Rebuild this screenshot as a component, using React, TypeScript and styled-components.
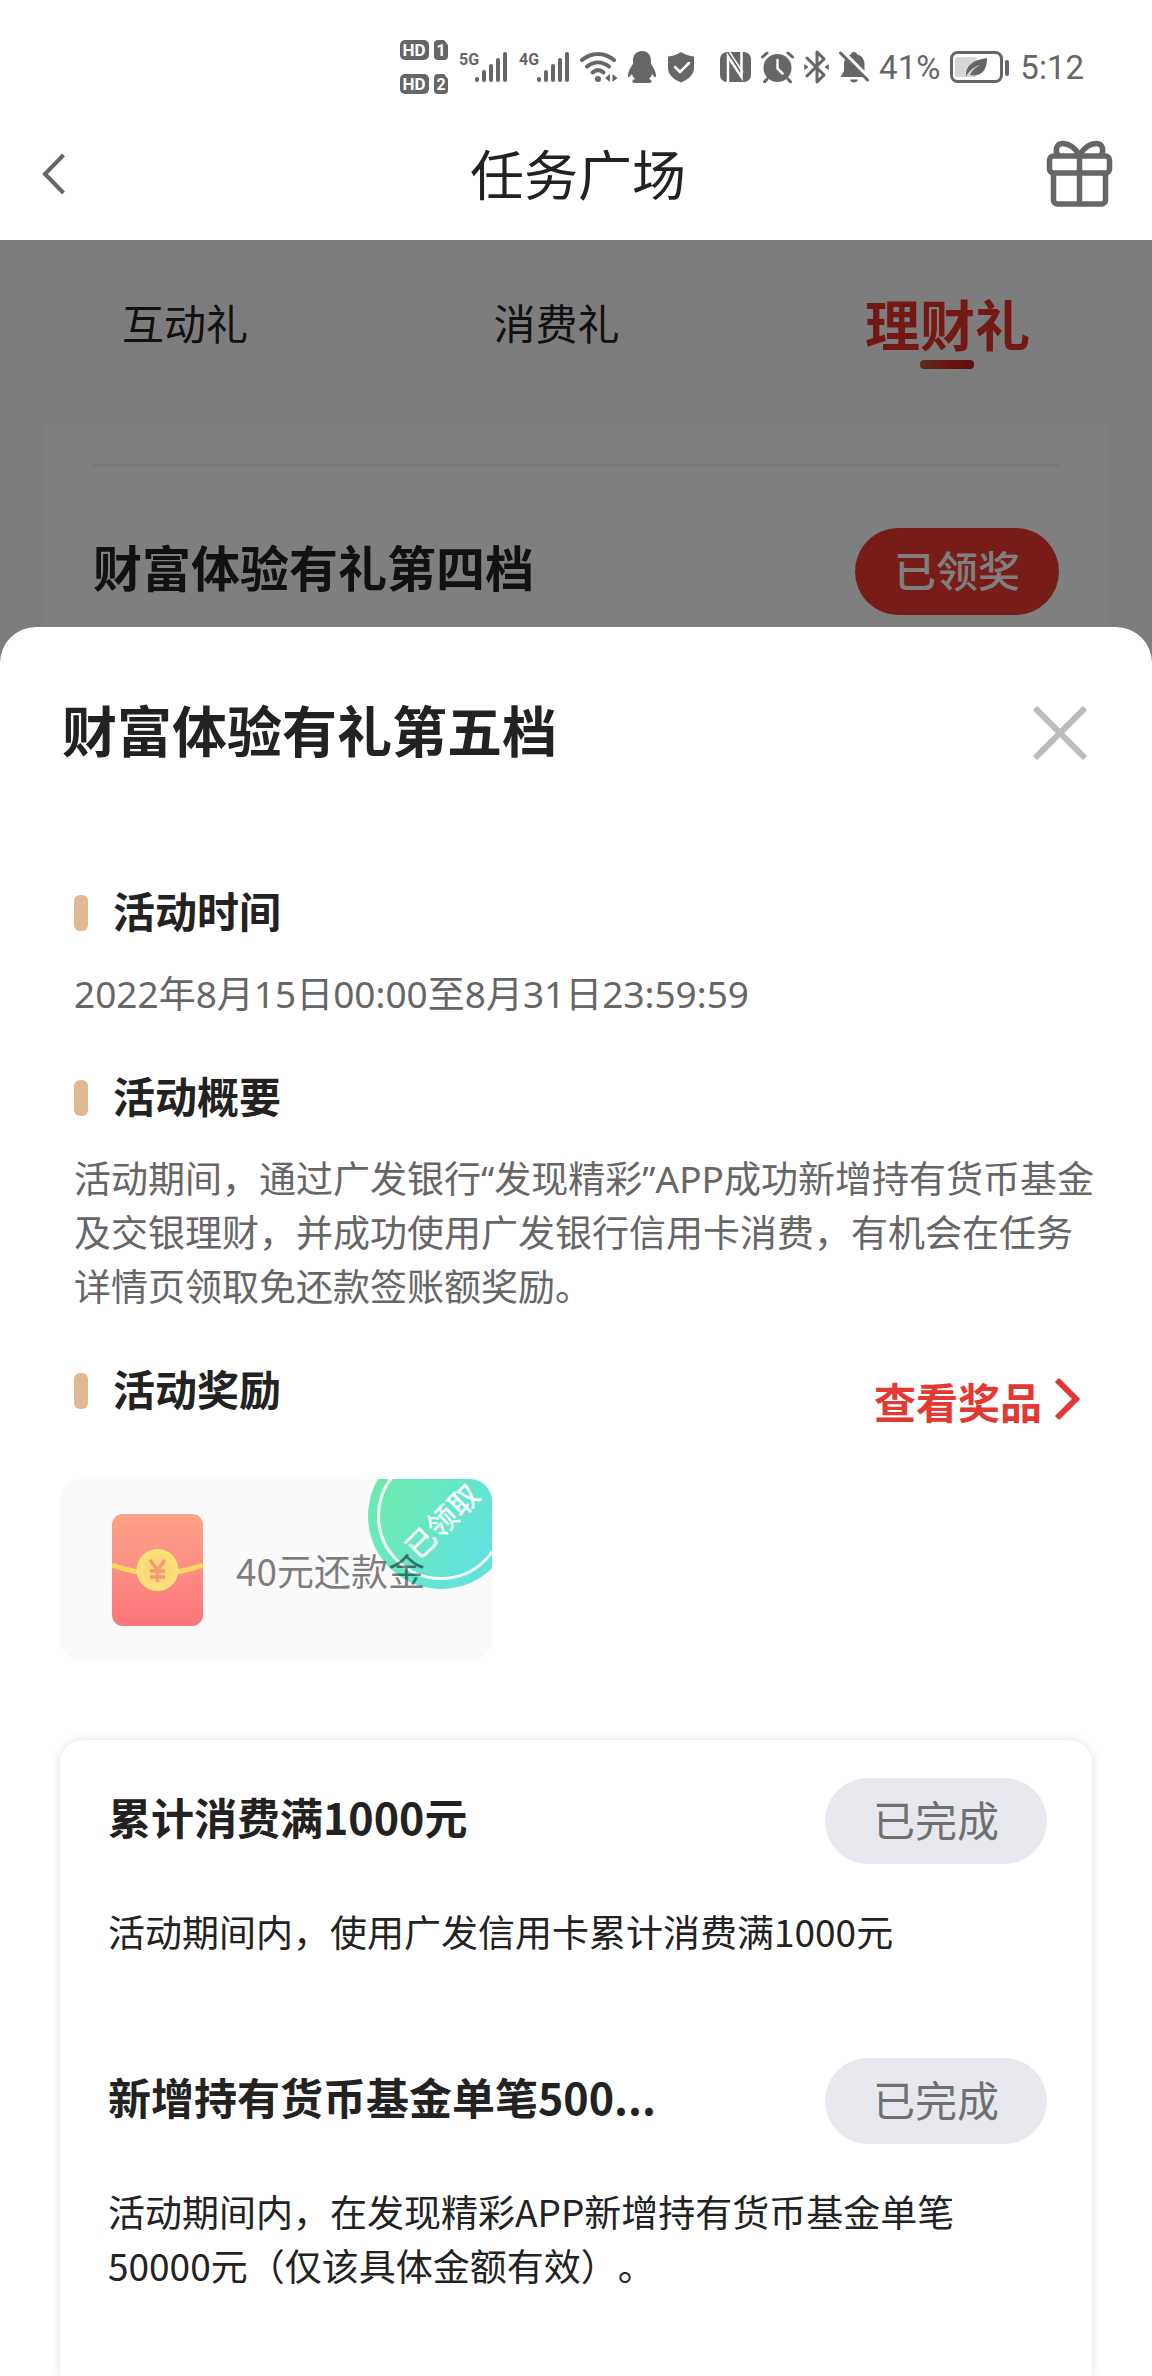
import React from 'react';
import styled, { createGlobalStyle } from 'styled-components';

const GlobalStyle = createGlobalStyle`
  *, *::before, *::after { box-sizing: border-box; }
  body {
    margin: 0;
    background: #fff;
    color: #222;
    font-family: "Noto Sans CJK SC", "Noto Sans", sans-serif;
    text-spacing-trim: space-all;
  }
  h1, h2, h3, p { margin: 0; }
  button { border: 0; margin: 0; padding: 0; background: none; color: inherit; font: inherit; cursor: pointer; }
`;

const Page = styled.div`
  display: flex;
  flex-direction: column;
  min-height: 100vh;
  overflow: hidden;
`;

/* ---------- status bar ---------- */

const StatusBar = styled.div`
  display: flex;
  justify-content: flex-end;
  align-items: center;
  gap: 24px;
  height: 110px;
  padding: 24px 68px 0 0;
  color: #666;
`;

const StatusGroup = styled.div`
  display: flex;
  align-items: center;
  gap: 10px;
`;

const StatusText = styled.span`
  padding-top: 2px;
  font: 400 33px/40px Roboto, sans-serif;
`;

const Glyph = styled.svg`
  display: block;
  flex: none;
`;

/* ---------- navigation ---------- */

const NavBar = styled.header`
  display: grid;
  grid-template-columns: 1fr auto 1fr;
  align-items: center;
  height: 130px;
  padding: 0 38px 0 42px;
`;

const NavTitle = styled.h1`
  padding-bottom: 4px;
  font-size: 54px;
  line-height: 80px;
  font-weight: 400;
`;

const NavButton = styled.button<{ $end?: boolean }>`
  justify-self: ${(p) => (p.$end ? 'end' : 'start')};
  padding-bottom: 2px;
  color: #666;
`;

/* ---------- dimmed content ---------- */

const Behind = styled.main`
  position: relative;
  height: 424px;
  background: #fbfbfb;
`;

const Dim = styled.div`
  position: absolute;
  inset: 0;
  background: rgba(0, 0, 0, 0.5);
`;

const Tabs = styled.nav`
  display: flex;
  justify-content: space-between;
  align-items: center;
  height: 184px;
  padding: 0 122px 20px;
`;

const Tab = styled.button<{ $active?: boolean }>`
  position: relative;
  font-size: ${(p) => (p.$active ? 55 : 42)}px;
  line-height: 80px;
  font-weight: ${(p) => (p.$active ? 700 : 400)};
  color: ${(p) => (p.$active ? '#e8302a' : '#222')};
  &::after {
    content: '';
    display: ${(p) => (p.$active ? 'block' : 'none')};
    position: absolute;
    left: 50%;
    bottom: -7px;
    width: 54px;
    height: 9px;
    margin-left: -27px;
    border-radius: 4px;
    background: linear-gradient(90deg, #b85a38, #d8241c 60%, #c01c18);
  }
`;

const TierCard = styled.section`
  height: 240px;
  margin: 0 44px;
  padding: 40px 49px 0;
  background: #fff;
`;

const TierRow = styled.div`
  display: flex;
  justify-content: space-between;
  align-items: center;
  padding-top: 62px;
  border-top: 2px solid #f0f0f0;
`;

const TierTitle = styled.h2`
  padding-bottom: 12px;
  font-size: 49px;
  line-height: 70px;
  font-weight: 700;
`;

const ClaimedPill = styled.button`
  width: 204px;
  height: 87px;
  padding-bottom: 6px;
  border-radius: 44px;
  background: #f0382e;
  color: #fff;
  font-size: 42px;
  font-weight: 500;
`;

/* ---------- bottom sheet ---------- */

const Sheet = styled.section`
  position: relative;
  display: flex;
  flex: 1;
  flex-direction: column;
  margin-top: -37px;
  padding: 66px 60px 0;
  border-radius: 36px 36px 0 0;
  background: #fff;
`;

const SheetHead = styled.div`
  display: flex;
  justify-content: space-between;
  align-items: center;
  padding: 0 5px 0 2px;
`;

const SheetTitle = styled.h2`
  padding-bottom: 10px;
  font-size: 55px;
  line-height: 70px;
  font-weight: 700;
`;

const Info = styled.div`
  display: flex;
  flex-direction: column;
  gap: 47px;
  margin: 110px -12px 0 14px;
`;

const Heading = styled.h3`
  display: flex;
  align-items: center;
  gap: 25px;
  font-size: 42px;
  line-height: 54px;
  font-weight: 700;
  &::before {
    content: '';
    width: 14px;
    height: 36px;
    margin-top: 5px;
    border-radius: 6px;
    background: #e0b892;
  }
`;

const InfoText = styled.p`
  margin-top: 30px;
  font-family: "Noto Sans", "Noto Sans CJK SC", sans-serif;
  font-size: 37px;
  line-height: 54px;
  color: #666;
`;

const RewardHead = styled.div`
  display: flex;
  justify-content: space-between;
  align-items: flex-start;
  padding-right: 24px;
`;

const PrizeLink = styled.a`
  display: flex;
  align-items: center;
  gap: 12px;
  font-size: 42px;
  line-height: 80px;
  font-weight: 700;
  color: #e23a33;
  text-decoration: none;
`;

const RewardCard = styled.div`
  position: relative;
  display: flex;
  align-items: center;
  gap: 33px;
  width: 432px;
  height: 182px;
  margin-top: 38px;
  padding-left: 52px;
  border-radius: 22px;
  overflow: hidden;
  background: #fafafa;
`;

const RewardName = styled.span`
  position: relative;
  font-size: 37px;
  line-height: 54px;
  color: rgba(0, 0, 0, 0.5);
`;

const Stamp = styled.div`
  position: absolute;
  top: -36px;
  right: -22px;
  display: grid;
  place-items: center;
  width: 146px;
  height: 146px;
  padding-top: 8px;
  border-radius: 50%;
  background: linear-gradient(120deg, #6ceab4 25%, #62e2dc 75%);
  &::before {
    content: '';
    position: absolute;
    inset: 9px;
    border: 3px solid #f4fffd;
    border-radius: 50%;
  }
`;

const StampText = styled.span`
  font-size: 30px;
  line-height: 30px;
  font-weight: 500;
  white-space: nowrap;
  color: #f4fffd;
  transform: rotate(-45deg);
`;

const TaskCard = styled.ul`
  display: flex;
  flex: 1;
  flex-direction: column;
  gap: 100px;
  margin: 79px 0 0;
  padding: 38px 45px 82px 48px;
  border-radius: 22px 22px 0 0;
  list-style: none;
  background: #fff;
  box-shadow: 0 0 10px rgba(0, 0, 0, 0.12);
`;

const TaskRow = styled.div`
  display: flex;
  justify-content: space-between;
  align-items: center;
`;

const TaskTitle = styled.h3`
  padding-bottom: 10px;
  font-size: 43px;
  line-height: 60px;
  font-weight: 700;
`;

const DonePill = styled.button`
  width: 222px;
  height: 86px;
  padding-bottom: 6px;
  border-radius: 43px;
  background: #e8e9ef;
  color: #707070;
  font-size: 42px;
`;

const TaskText = styled.p`
  margin-top: 40px;
  padding-right: 80px;
  font-size: 37px;
  line-height: 54px;
`;

/* ---------- drawings ---------- */

const HdBadges = () => (
  <Glyph width="48" height="54" viewBox="0 0 48 54" fill="currentColor">
    {[0, 34].map((y, i) => (
      <g key={y}>
        <rect x="0" y={y} width="29" height="20" rx="5" />
        <path d={`M38 ${y}h6l4 5v11a4 4 0 0 1-4 4h-6a4 4 0 0 1-4-4v-12a4 4 0 0 1 4-4z`} />
        <text x="14" y={y + 16} fill="#fff" fontFamily="Roboto, sans-serif" fontSize="17" fontWeight="700" textAnchor="middle">HD</text>
        <text x="41" y={y + 16} fill="#fff" fontFamily="Roboto, sans-serif" fontSize="16" fontWeight="700" textAnchor="middle">{i + 1}</text>
      </g>
    ))}
  </Glyph>
);

const Signal = ({ label, width }: { label: string; width: number }) => (
  <Glyph width={width} height="36" viewBox={`0 -2 ${width} 36`} fill="currentColor">
    <text x="1" y="14" fontFamily="Roboto, sans-serif" fontSize="16" fontWeight="700">{label}</text>
    {[5, 12, 18, 24, 30].map((h, i) => (
      <rect key={h} x={width - 33 + i * 7} y={31 - h} width="4" height={h} rx="2" />
    ))}
  </Glyph>
);

const Wifi = () => (
  <Glyph width="38" height="32" viewBox="0 0 38 32" fill="none" stroke="currentColor" strokeWidth="4" strokeLinecap="round">
    <path d="M2 9C12 1 24 1 34 9" />
    <path d="M7 15.500C14 10 22 10 29 15.500" />
    <path d="M12.500 21.500C16 18.500 20 18.500 23.500 21.500" />
    <circle cx="18" cy="28" r="3" fill="currentColor" stroke="none" />
    <path d="M30 23v8l-5-4zM32.500 31v-8l5 4z" fill="currentColor" stroke="none" />
  </Glyph>
);

const Penguin = () => (
  <Glyph width="28" height="32" viewBox="0 0 28 32" fill="currentColor">
    <path d="M14 0C8.500 0 5 4 5 9.500c0 1 .1 2 .2 3C3 16 0 20.500 0 24.500c0 1.800.8 2 1.600 1.200L4 23c.6 2 1.500 3.500 3 5-1.800.6-2.700 1.500-2.700 2.400C4.300 31.600 6 32 8.500 32h11c2.500 0 4.200-.4 4.200-1.600 0-.9-.9-1.800-2.700-2.400 1.500-1.500 2.400-3 3-5l2.400 2.700c.8.8 1.600.6 1.600-1.200 0-4-3-8.500-5.200-12 .1-1 .2-2 .2-3C23 4 19.500 0 14 0z" />
  </Glyph>
);

const Shield = () => (
  <Glyph width="30" height="32" viewBox="-4 0 30 32">
    <path d="M11 1c4 2.800 8 4 13 4.500V17c0 7-6 11.500-13 14.500C4 28.500-2 24-2 17V5.500C3 5 7 3.800 11 1z" fill="currentColor" />
    <path d="M5 16l5 5 9-9" fill="none" stroke="#fff" strokeWidth="2.500" strokeLinecap="round" />
  </Glyph>
);

const Nfc = () => (
  <Glyph width="31" height="32" viewBox="0 0 31 32">
    <rect x="0" y="1" width="31" height="30" rx="7" fill="currentColor" />
    <path d="M8 31V5.500L21.500 26V1" fill="none" stroke="#fff" strokeWidth="2.500" />
    <path d="M9.500 1L23 21.500" fill="none" stroke="#fff" strokeWidth="1.500" />
  </Glyph>
);

const Alarm = () => (
  <Glyph width="33" height="32" viewBox="0 0 33 32" fill="none" stroke="currentColor" strokeWidth="3" strokeLinecap="round">
    <circle cx="16.500" cy="17" r="14" fill="currentColor" stroke="none" />
    <path d="M1.500 6L6 2M31.500 6L27 2M6 28l-2.500 3M27 28l2.500 3" />
    <path d="M16.500 9v8.500l5 5" stroke="#fff" strokeWidth="2.500" />
  </Glyph>
);

const Bluetooth = () => (
  <Glyph width="25" height="34" viewBox="0 0 25 34" fill="none" stroke="currentColor" strokeWidth="3" strokeLinejoin="round" strokeLinecap="round">
    <path d="M3 8l17 17-7 7V2l7 7L3 26" />
    <path d="M1 15l3 2-3 2zM24 15l-3 2 3 2z" strokeWidth="1" fill="currentColor" />
  </Glyph>
);

const BellOff = () => (
  <Glyph width="30" height="32" viewBox="0 0 30 32">
    <path d="M15 1c2 0 3 1 3 2.500 5 1.200 7.500 5 7.500 10V20l2.500 5v1H2v-1l3-5v-6.500c0-5 2.500-8.800 7-10C12 2 13 1 15 1zM11 28.500h8c-.8 4-7.200 4-8 0z" fill="currentColor" />
    <path d="M3 0l28 28" stroke="#fff" strokeWidth="4" />
    <path d="M1.500 2l27 27" stroke="currentColor" strokeWidth="3" strokeLinecap="round" />
  </Glyph>
);

const Battery = () => (
  <Glyph width="60" height="32" viewBox="0 0 60 32">
    <rect x="1.500" y="1.500" width="50" height="29" rx="6" fill="none" stroke="currentColor" strokeWidth="3" />
    <rect x="5" y="6" width="22" height="20" rx="2" fill="#d6d6d6" />
    <path d="M16 26c-1-11 6-17 21-19 0 13-6 19-17 17 2-5 6-8 10-10-6 2-11 5-14 12z" fill="currentColor" />
    <rect x="55" y="9" width="4" height="16" rx="2" fill="currentColor" />
  </Glyph>
);

const BackIcon = () => (
  <Glyph width="24" height="42" viewBox="0 0 24 42" fill="none" stroke="currentColor" strokeWidth="4">
    <path d="M21.500 2L3 21l18.500 19" />
  </Glyph>
);

const GiftIcon = () => (
  <Glyph width="68" height="68" viewBox="0 0 68 68" fill="none" stroke="currentColor" strokeWidth="5.500" strokeLinejoin="round">
    <rect x="3.500" y="16" width="60" height="17" rx="4" />
    <path d="M7.500 33v27a4 4 0 0 0 4 4h44a4 4 0 0 0 4-4V33M33.500 16v48" />
    <path d="M33.500 15C29 8 23 3.500 16.500 3.500c-6 0-8 7-4.500 12.500M33.500 15C38 8 44 3.500 50.500 3.500c6 0 8 7 4.500 12.500" />
  </Glyph>
);

const CloseIcon = () => (
  <Glyph width="54" height="54" viewBox="0 0 54 54" fill="none" stroke="#bbb" strokeWidth="6">
    <path d="M2 2l50 50M52 2L2 52" />
  </Glyph>
);

const ChevronIcon = () => (
  <Glyph width="26" height="46" viewBox="0 0 26 46" fill="none" stroke="currentColor" strokeWidth="6">
    <path d="M3 2l19 19L3 40" />
  </Glyph>
);

const RedPacket = () => (
  <Glyph width="91" height="112" viewBox="0 0 91 112">
    <defs>
      <linearGradient id="packet" x1="0" y1="0" x2="0" y2="1">
        <stop offset="0" stopColor="#ffa287" />
        <stop offset="0.450" stopColor="#fb9086" />
        <stop offset="1" stopColor="#ff7678" />
      </linearGradient>
      <radialGradient id="coin">
        <stop offset="0.600" stopColor="#fbd87c" />
        <stop offset="1" stopColor="#ffe574" />
      </radialGradient>
    </defs>
    <rect width="91" height="112" rx="11" fill="url(#packet)" />
    <path d="M0 51c30 11 61 11 91 0" fill="none" stroke="#ffd95f" strokeWidth="5" />
    <circle cx="45.500" cy="56" r="21" fill="url(#coin)" />
    <path d="M38 46l7.500 10L53 46M45.500 56v12M38 57h15M38 63h15" fill="none" stroke="#f59a72" strokeWidth="3.500" />
  </Glyph>
);

const tasks = [
  { title: '累计消费满1000元', text: '活动期间内，使用广发信用卡累计消费满1000元' },
  { title: '新增持有货币基金单笔500...', text: '活动期间内，在发现精彩APP新增持有货币基金单笔50000元（仅该具体金额有效）。' },
];

export default function App() {
  return (
    <Page lang="zh-CN">
      <GlobalStyle />
      <StatusBar>
        <StatusGroup>
          <HdBadges />
          <Signal label="5G" width={50} />
          <Signal label="4G" width={52} />
          <Wifi />
          <Penguin />
          <Shield />
        </StatusGroup>
        <StatusGroup>
          <Nfc />
          <Alarm />
          <Bluetooth />
          <BellOff />
          <StatusText>41%</StatusText>
          <Battery />
          <StatusText>5:12</StatusText>
        </StatusGroup>
      </StatusBar>
      <NavBar>
        <NavButton aria-label="返回"><BackIcon /></NavButton>
        <NavTitle>任务广场</NavTitle>
        <NavButton $end aria-label="礼品"><GiftIcon /></NavButton>
      </NavBar>

      <Behind>
        <Tabs>
          <Tab>互动礼</Tab>
          <Tab>消费礼</Tab>
          <Tab $active>理财礼</Tab>
        </Tabs>
        <TierCard>
          <TierRow>
            <TierTitle>财富体验有礼第四档</TierTitle>
            <ClaimedPill>已领奖</ClaimedPill>
          </TierRow>
        </TierCard>
        <Dim />
      </Behind>

      <Sheet role="dialog" aria-labelledby="sheet-title">
        <SheetHead>
          <SheetTitle id="sheet-title">财富体验有礼第五档</SheetTitle>
          <button aria-label="关闭"><CloseIcon /></button>
        </SheetHead>

        <Info>
          <div>
            <Heading>活动时间</Heading>
            <InfoText>2022年8月15日00:00至8月31日23:59:59</InfoText>
          </div>
          <div>
            <Heading>活动概要</Heading>
            <InfoText>
              活动期间，通过广发银行“发现精彩”APP成功新增持有货币基金及交银理财，并成功使用广发银行信用卡消费，有机会在任务详情页领取免还款签账额奖励。
            </InfoText>
          </div>
          <RewardHead>
            <Heading>活动奖励</Heading>
            <PrizeLink href="#prizes">查看奖品<ChevronIcon /></PrizeLink>
          </RewardHead>
        </Info>

        <RewardCard>
          <RedPacket />
          <Stamp><StampText>已领取</StampText></Stamp>
          <RewardName>40元还款金</RewardName>
        </RewardCard>

        <TaskCard>
          {tasks.map((task) => (
            <li key={task.title}>
              <TaskRow>
                <TaskTitle>{task.title}</TaskTitle>
                <DonePill>已完成</DonePill>
              </TaskRow>
              <TaskText>{task.text}</TaskText>
            </li>
          ))}
        </TaskCard>
      </Sheet>
    </Page>
  );
}
